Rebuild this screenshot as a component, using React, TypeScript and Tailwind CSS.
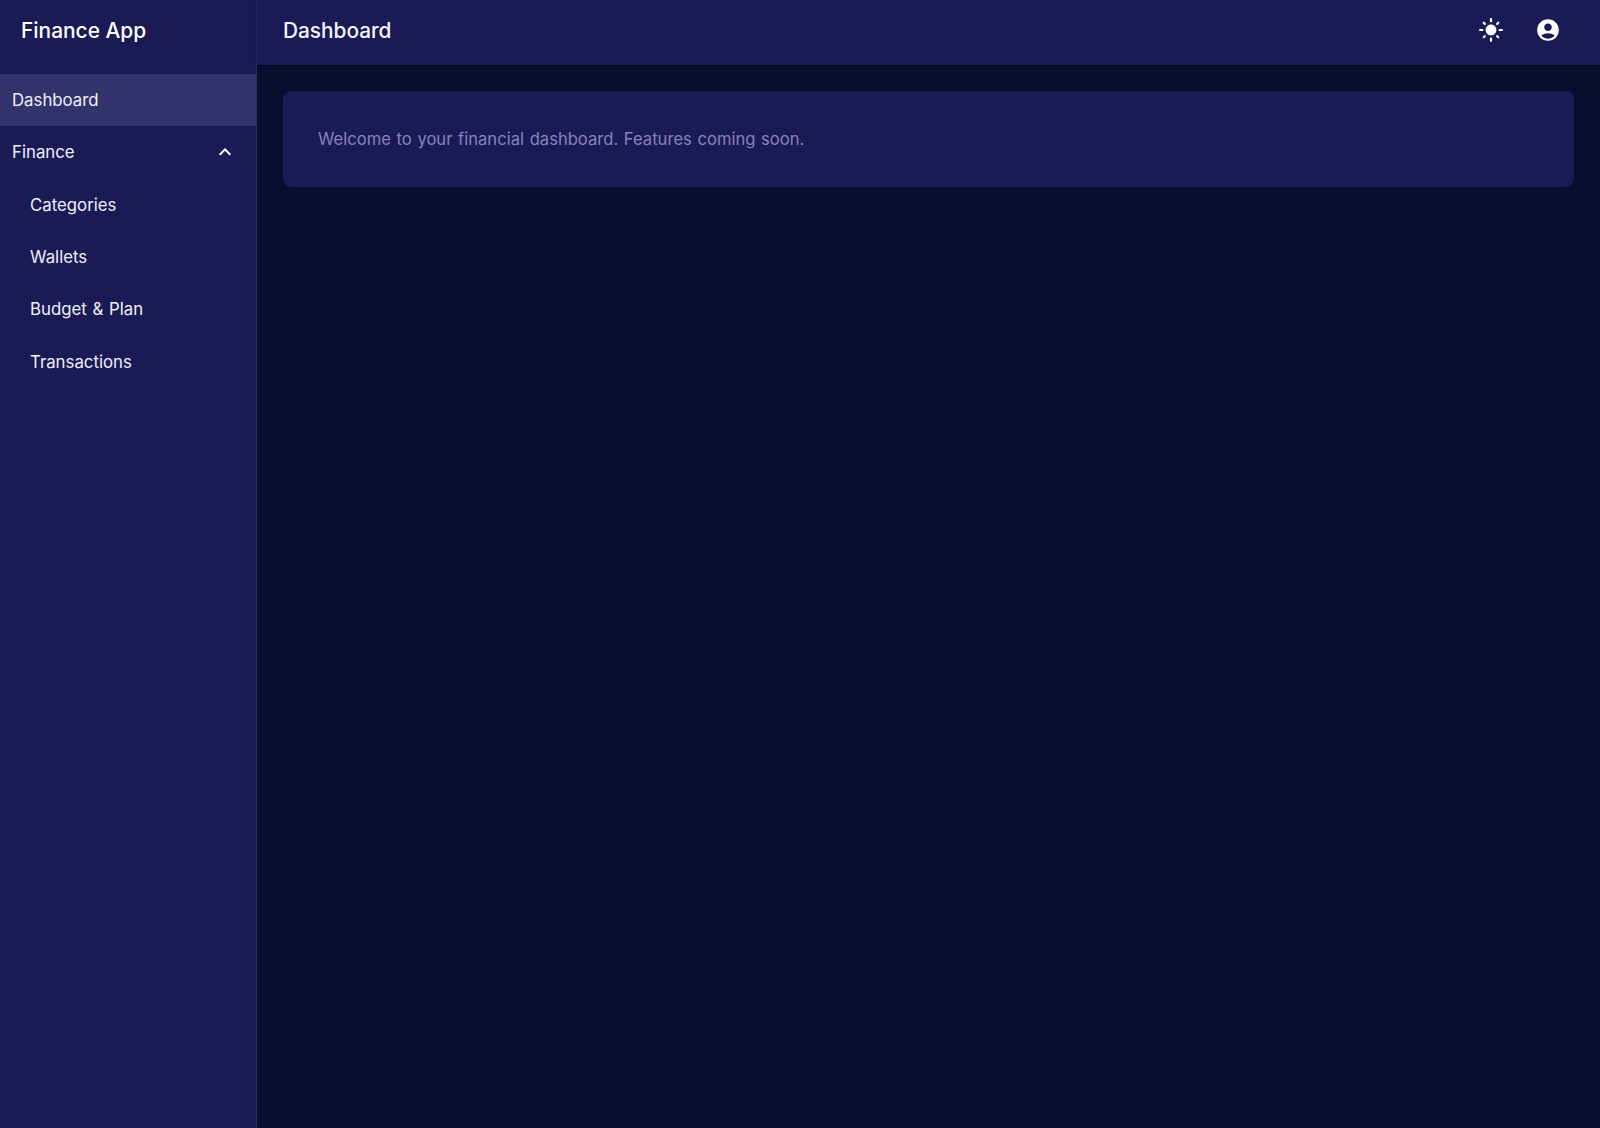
const navFont = "font-['Inter','Noto_Sans',sans-serif]";

function Icon({ d, size = 24 }: { d: string; size?: number }) {
  return (
    <svg width={size} height={size} viewBox="0 0 24 24" fill="currentColor">
      <path d={d} />
    </svg>
  );
}

const sunPath =
  'M12 7c-2.76 0-5 2.24-5 5s2.24 5 5 5 5-2.24 5-5-2.24-5-5-5zM2 13h2c.55 0 1-.45 1-1s-.45-1-1-1H2c-.55 0-1 .45-1 1s.45 1 1 1zm18 0h2c.55 0 1-.45 1-1s-.45-1-1-1h-2c-.55 0-1 .45-1 1s.45 1 1 1zM11 2v2c0 .55.45 1 1 1s1-.45 1-1V2c0-.55-.45-1-1-1s-1 .45-1 1zm0 18v2c0 .55.45 1 1 1s1-.45 1-1v-2c0-.55-.45-1-1-1s-1 .45-1 1zM5.99 4.58a.9959.9959 0 0 0-1.41 0c-.39.39-.39 1.03 0 1.41l1.06 1.06c.39.39 1.03.39 1.41 0s.39-1.03 0-1.41L5.99 4.58zm12.37 12.37a.9959.9959 0 0 0-1.41 0c-.39.39-.39 1.03 0 1.41l1.06 1.06c.39.39 1.03.39 1.41 0 .39-.39.39-1.03 0-1.41l-1.06-1.06zm1.06-10.96c.39-.39.39-1.03 0-1.41a.9959.9959 0 0 0-1.41 0l-1.06 1.06c-.39.39-.39 1.03 0 1.41s1.03.39 1.41 0l1.06-1.06zM7.05 18.36c.39-.39.39-1.03 0-1.41a.9959.9959 0 0 0-1.41 0l-1.06 1.06c-.39.39-.39 1.03 0 1.41s1.03.39 1.41 0l1.06-1.06z';
const accountPath =
  'M12 2C6.48 2 2 6.48 2 12s4.48 10 10 10 10-4.48 10-10S17.52 2 12 2zm0 4c1.93 0 3.5 1.57 3.5 3.5S13.93 13 12 13s-3.5-1.57-3.5-3.5S10.07 6 12 6zm0 14c-2.03 0-4.43-.82-6.14-2.88C7.55 15.8 9.68 15 12 15s4.45.8 6.14 2.12C16.43 19.18 14.03 20 12 20z';
const expandLessPath = 'm12 8-6 6 1.41 1.41L12 10.83l4.59 4.58L18 14z';

const subItems = ['Categories', 'Wallets', 'Budget & Plan', 'Transactions'];

function Sidebar() {
  return (
    <aside className="w-[257px] shrink-0 bg-[#1a1a55] border-r border-[#2a2a66] text-[#f0f0fa]">
      {/* Brand */}
      <div className="h-[74px] pl-[21px] pt-[15.5px]">
        <h1 className="text-[20.9px] leading-[30px] font-medium text-white">Finance App</h1>
      </div>

      {/* Nav */}
      <nav className="text-[16.8px] [word-spacing:1px]">
        <div className="h-[52.3px] flex items-center pl-[12px] pt-[1px] bg-[#33336b]">Dashboard</div>
        <div className="h-[52.3px] flex items-center justify-between pl-[12px] pr-[19px]">
          <span className="pt-[1px]">Finance</span>
          <span className="text-white">
            <Icon d={expandLessPath} />
          </span>
        </div>
        {subItems.map(item => (
          <div key={item} className="h-[52.3px] flex items-center pl-[30px] pt-[1px]">
            {item}
          </div>
        ))}
      </nav>
    </aside>
  );
}

export default function App() {
  return (
    <div className={`h-screen flex bg-[#0a0e2e] overflow-hidden ${navFont}`}>
      <Sidebar />
      <div className="flex-1 flex flex-col min-w-0">
        {/* Top bar */}
        <header className="h-[65px] shrink-0 flex items-center justify-between pl-[26px] pr-[32px] bg-[#1a1a55] shadow-[0_1px_3px_rgba(0,0,0,0.3)]">
          <h2 className="text-[20.8px] font-medium text-[#f5f5fc] -mt-[3px]">Dashboard</h2>
          <div className="flex items-center gap-[17px] text-white -mt-[5px]">
            <button className="w-10 h-10 flex items-center justify-center">
              <Icon d={sunPath} size={26} />
            </button>
            <button className="w-10 h-10 flex items-center justify-center">
              <Icon d={accountPath} size={26} />
            </button>
          </div>
        </header>

        {/* Content */}
        <main className="flex-1 pt-[26px] px-[26px]">
          <div className="h-[96px] flex items-center px-[35px] rounded-lg bg-[#1a1a55] shadow-[0_1px_3px_rgba(0,0,0,0.25)]">
            <p className="text-[16.6px] [word-spacing:1px] pt-[1px] text-[#8782bd]">Welcome to your financial dashboard. Features coming soon.</p>
          </div>
        </main>
      </div>
    </div>
  );
}
